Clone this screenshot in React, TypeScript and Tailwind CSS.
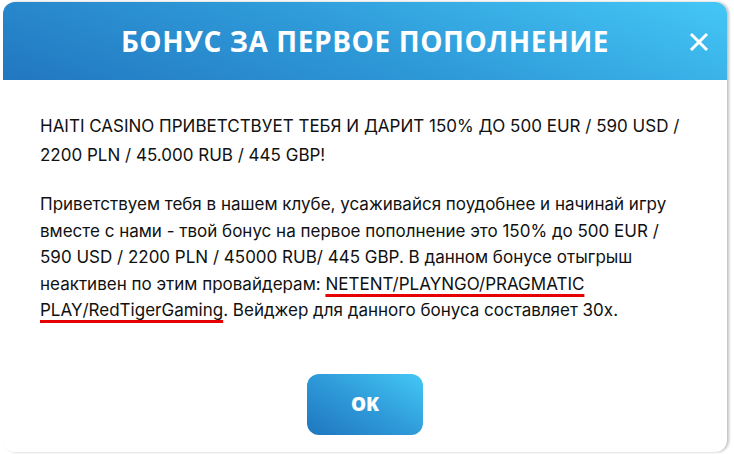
import React from "react";

export default function App() {
  return (
    <div className="w-[734px] h-[454px] bg-white overflow-hidden relative" style={{ fontFamily: "Inter, 'Noto Sans', sans-serif" }}>
      <div className="absolute left-[3px] top-[2px] w-[724px] h-[450px] rounded-[12px] bg-white shadow-[2px_0_3px_rgba(0,0,0,0.25)] overflow-hidden flex flex-col">
        <div className="h-[78px] shrink-0 flex items-center justify-center relative bg-[linear-gradient(200deg,#44c7f6_0%,#2f9bd9_50%,#2277c0_100%)]">
          <h1 className="text-white font-bold text-[28px] tracking-[0.6px]" style={{ fontFamily: "'Open Sans', sans-serif" }}>
            БОНУС ЗА ПЕРВОЕ ПОПОЛНЕНИЕ
          </h1>
          <button className="absolute right-[17px] top-[29px] w-[22px] h-[22px] flex items-center justify-center">
            <svg width="20" height="20" viewBox="0 0 20 20">
              <path d="M2 2 L18 18 M18 2 L2 18" stroke="white" strokeWidth="3" />
            </svg>
          </button>
        </div>
        <div className="px-[37px] pt-[32px] text-[17px] text-[#111111]">
          <p className="leading-[29px]">
            HAITI CASINO ПРИВЕТСТВУЕТ ТЕБЯ И ДАРИТ 150% ДО 500 EUR / 590 USD /<br />
            2200 PLN / 45.000 RUB / 445 GBP!
          </p>
          <p className="leading-[26.5px] mt-[21px]">
            Приветствуем тебя в нашем клубе, усаживайся поудобнее и начинай игру<br />
            вместе с нами - твой бонус на первое пополнение это 150% до 500 EUR /<br />
            590 USD / 2200 PLN / 45000 RUB/ 445 GBP. В данном бонусе отыгрыш<br />
            неактивен по этим провайдерам:{" "}
            <span className="underline decoration-[#e60000] decoration-[3px] underline-offset-[4px]">NETENT/PLAYNGO/PRAGMATIC</span>
            <br />
            <span className="underline decoration-[#e60000] decoration-[3px] underline-offset-[4px]">PLAY/RedTigerGaming</span>. Вейджер для данного бонуса составляет 30х.
          </p>
          <div className="flex justify-center mt-[50px]">
            <button className="w-[116px] h-[61px] rounded-[12px] text-white font-extrabold text-[19px] bg-[linear-gradient(30deg,#1f76bf_0%,#2f9bd9_50%,#43c8f6_100%)]" style={{ fontFamily: "'Open Sans', sans-serif" }}>
              OK
            </button>
          </div>
        </div>
      </div>
    </div>
  );
}
